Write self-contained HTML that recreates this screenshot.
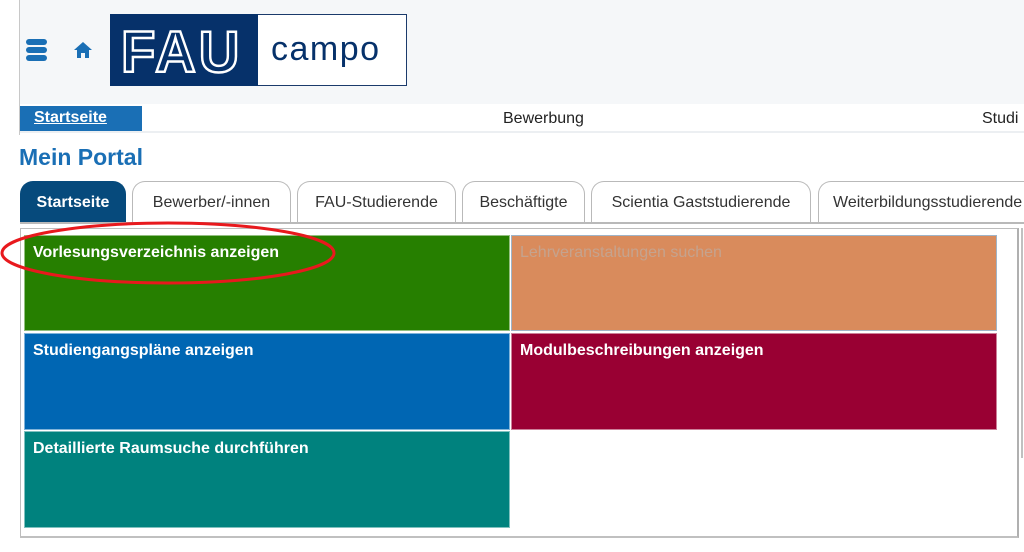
<!DOCTYPE html>
<html><head><meta charset="utf-8"><style>
*{margin:0;padding:0;box-sizing:border-box}
body{width:1024px;height:552px;overflow:hidden;background:#fff;font-family:"Liberation Sans",sans-serif;position:relative}
.abs{position:absolute}
.hdr{left:20px;top:0;width:1004px;height:104px;background:#f5f7f9}
.vl{left:19px;top:0;width:1px;height:135px;background:#c8c8c8}
.nav{left:20px;top:104px;width:1004px;height:29px;background:#fff;border-bottom:2px solid #eceff2;font-size:16px;color:#222}
.tab{position:absolute;top:181px;height:42px;border:1px solid #b9b9b9;border-bottom:none;border-radius:13px 13px 0 0;background:#fff;font-size:16px;color:#333;text-align:center;line-height:42px;white-space:nowrap;overflow:hidden}
.tile{position:absolute;color:#fff;font-size:16px;font-weight:bold;padding:8px 8px;border:1px solid rgba(255,255,255,.5)}
</style></head><body>
<div class="abs hdr"></div>
<div class="abs vl"></div>
<div class="abs" style="left:26px;top:39px;width:21px;height:6px;background:#1a6fb5;border-radius:3px"></div>
<div class="abs" style="left:26px;top:47px;width:21px;height:6px;background:#1a6fb5;border-radius:3px"></div>
<div class="abs" style="left:26px;top:55px;width:21px;height:6px;background:#1a6fb5;border-radius:3px"></div>
<svg class="abs" style="left:73px;top:41px" width="20" height="18" viewBox="0 0 20 18"><path d="M10 1 L19 9 L16 9 L16 17 L12 17 L12 12 L8 12 L8 17 L4 17 L4 9 L1 9 Z" fill="#1a6fb5"/></svg>
<div class="abs" style="left:110px;top:14px;width:297px;height:72px;border:1px solid #1b3a6b;background:#fff"></div>
<div class="abs" style="left:110px;top:14px;width:148px;height:72px;background:#06316a"></div>
<div class="abs" style="left:121px;top:19px;font-size:58px;font-weight:bold;color:#06316a;-webkit-text-stroke:2.5px #fff;letter-spacing:3px;transform:scaleX(0.97);transform-origin:left">FAU</div>
<div class="abs" style="left:271px;top:30px;font-size:34px;color:#06316a;letter-spacing:1.5px">campo</div>
<div class="abs nav"></div>
<div class="abs" style="left:20px;top:106px;width:122px;height:25px;background:#1a6fb5;color:#fff;font-size:16px;font-weight:bold;text-decoration:underline;padding:3px 0 0 14px">Startseite</div>
<div class="abs" style="left:503px;top:110px;font-size:16px;color:#222">Bewerbung</div>
<div class="abs" style="left:982px;top:110px;font-size:16px;color:#222">Studi</div>
<div class="abs" style="left:19px;top:144px;font-size:23px;font-weight:bold;color:#1a6fb5">Mein Portal</div>
<div class="tab" style="left:20px;width:106px;background:#064a7c;color:#fff;border-color:#064a7c;font-weight:bold">Startseite</div>
<div class="tab" style="left:132px;width:159px">Bewerber/-innen</div>
<div class="tab" style="left:297px;width:159px">FAU-Studierende</div>
<div class="tab" style="left:462px;width:123px">Beschäftigte</div>
<div class="tab" style="left:591px;width:220px">Scientia Gaststudierende</div>
<div class="tab" style="left:818px;width:220px;text-align:left;padding-left:14px">Weiterbildungsstudierende</div>
<div class="abs" style="left:20px;top:222px;width:1004px;height:2px;background:#b9b9b9"></div>
<div class="abs" style="left:20px;top:228px;width:999px;height:310px;border:1px solid #bdbdbd;border-right:2px solid #b0b0b0;border-bottom:2px solid #c0c0c0"></div>
<div class="abs" style="left:1021px;top:228px;width:2px;height:230px;background:#c0c0c0"></div>
<div class="tile" style="left:24px;top:235px;width:486px;height:96px;background:#267f00">Vorlesungsverzeichnis anzeigen</div>
<div class="tile" style="left:511px;top:235px;width:486px;height:96px;background:#d98b5c;color:#c5a38e;font-weight:normal;border-color:#9fb4c8">Lehrveranstaltungen suchen</div>
<div class="tile" style="left:24px;top:333px;width:486px;height:97px;background:#0066b3">Studiengangspläne anzeigen</div>
<div class="tile" style="left:511px;top:333px;width:486px;height:97px;background:#990033">Modulbeschreibungen anzeigen</div>
<div class="tile" style="left:24px;top:431px;width:486px;height:97px;background:#00827e">Detaillierte Raumsuche durchführen</div>
<svg class="abs" style="left:0;top:218px" width="345" height="72"><ellipse cx="168" cy="35" rx="166" ry="30" fill="none" stroke="#e8191d" stroke-width="3"/></svg>
</body></html>
